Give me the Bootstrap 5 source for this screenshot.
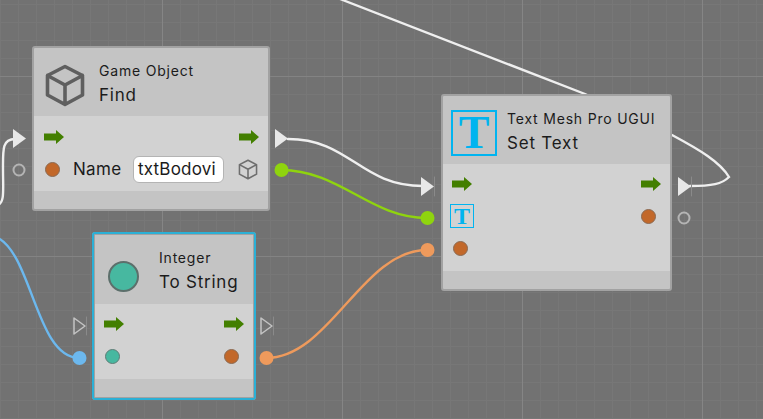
<!DOCTYPE html>
<html lang="en">
<head>
<meta charset="utf-8">
<title>Flow graph</title>
<link href="https://cdn.jsdelivr.net/npm/bootstrap@5.3.0/dist/css/bootstrap.min.css" rel="stylesheet">
<style>
html,body{margin:0;height:100%;background:#727272;overflow:hidden}
.graph-canvas{position:relative;width:763px;height:419px;overflow:hidden;background-color:#727272;
 background-image:
  linear-gradient(to right,#858585 1px,transparent 1px),
  linear-gradient(to bottom,#838383 1px,transparent 1px),
  linear-gradient(to right,#777 1px,transparent 1px),
  linear-gradient(to bottom,#777 1px,transparent 1px);
 background-size:180px 180px,180px 180px,18px 18px,18px 18px;
 background-position:162px 0,0 76px,0 0,0 4px;
 font-family:Inter,"Liberation Sans",sans-serif;color:#1b1b1b}
.wires{position:absolute;left:0;top:0;width:763px;height:419px}
.flow-node{position:absolute;background:#c4c4c4;border:2px solid #a2a2a2;border-radius:3px}
.node-find{left:32px;top:46px;width:238px;height:165px}
.node-string{left:92px;top:232px;width:164px;height:168px;outline:2px solid #2bb0d6;outline-offset:-2px;border-width:3px}
.node-text{left:441px;top:94px;width:231px;height:197px}
.node-head{height:68px}
.node-string .node-head{height:69px}
.title-stack{margin-top:4px}
.node-string .title-stack{margin-top:3px}
.head-icon-find{margin-left:11px;margin-right:14px;margin-top:7px}
.head-icon-string{margin-left:13px;margin-right:20px;margin-top:14px}
.head-icon-text{margin-left:8px;margin-right:10px;margin-top:6px}
.title-small{font-size:14px;line-height:18px;letter-spacing:.8px}
.title-big{font-size:17px;line-height:24px;letter-spacing:.78px;margin-top:3px}
.node-body{background:#d2d2d2;padding:4px 9px 0 10px}
.node-find .node-body{height:75px}
.node-string .node-body{height:75px;padding:3px 9px 0}
.node-text .node-body{height:107px;padding:4px 9px 0}
.port-line{height:33px}
.node-text .port-line{height:32px}
.flow-arrow{width:20px;height:14px;display:block}
.dot{width:15px;height:15px;border-radius:50%;background:#c2682a;border:1px solid #8b6a52;flex:none}
.dot-teal{background:#47b8a0;border-color:#5f7c76}
.dot-in{margin-left:1px}
.dot-out{margin-right:5px}
.name-label{font-size:17px;margin-left:13px;width:60px;letter-spacing:.3px}
.text-field{width:91px;height:27px;background:#fff;border:1px solid #b4b4b4;border-radius:6px;font-size:17px;line-height:25px;padding-left:4px;letter-spacing:.2px;white-space:nowrap;overflow:hidden}
.find-cube{margin-left:14px}
.big-t{width:46px;height:46px;border:2px solid #00b4f0;color:#00b4f0;font-family:"Liberation Serif",serif;font-weight:700;font-size:46px;line-height:42px;text-align:center}
.small-t{width:24px;height:24px;margin-left:-2px;border:1px solid #00b4f0;color:#00b4f0;font-family:"Liberation Serif",serif;font-weight:700;font-size:24px;line-height:22px;text-align:center}
.teal-ball{width:31px;height:31px;border-radius:50%;background:#47b8a0;border:2px solid #5c6f6b}
</style>
</head>
<body>
<div class="graph-canvas">
  <svg class="wires" viewBox="0 0 763 419" fill="none" stroke-linecap="round">
    <path d="M340 -1 L585 94 L672 135 C700 150 720 162 729 177 C722 184 712 186 690 186" stroke="#efefef" stroke-width="2.400"/>
    <path d="M288 139 C350 139 360 186 423 186" stroke="#efefef" stroke-width="2.400"/>
    <path d="M15 139 C2 139 3 150 3 170 C3 190 5 204 -3 205" stroke="#efefef" stroke-width="2.400"/>
    <path d="M281 170 C340 170 370 218 427 218" stroke="#8fd40e" stroke-width="2.400"/>
    <path d="M266 358 C330 358 362 250 427 250" stroke="#ee9a5c" stroke-width="2.400"/>
    <path d="M-4 237 C32 252 36 358 79 358" stroke="#6cb8ee" stroke-width="2.400"/>
    <g stroke="#8a8a8a" stroke-width="1">
      <path d="M434.500 177V196M691.500 177V196M86.500 317V335M273.500 317V335"/>
    </g>
    <g fill="#e8e8e8" stroke="none">
      <polygon points="13,129 26,138.500 13,148"/>
      <polygon points="275,129 288,138.500 275,148"/>
      <polygon points="421,177 434,186.500 421,196"/>
      <polygon points="678,177 691,186.500 678,196"/>
    </g>
    <g stroke="#c4c4c4" stroke-width="1.500" stroke-linejoin="round">
      <polygon points="74,318 85,326 74,334"/>
      <polygon points="261,318 272,326 261,334"/>
    </g>
    <g stroke="#b4b4b4" stroke-width="2">
      <circle cx="19" cy="170" r="5.500"/>
      <circle cx="684" cy="218" r="5.500"/>
    </g>
    <g stroke="none">
      <circle cx="281.500" cy="170" r="7" fill="#8fd40e"/>
      <circle cx="427.500" cy="218" r="7" fill="#8fd40e"/>
      <circle cx="427.500" cy="250" r="7" fill="#ee9a5c"/>
      <circle cx="79.500" cy="358" r="7" fill="#6cb8ee"/>
      <circle cx="266.500" cy="358" r="7" fill="#ee9a5c"/>
    </g>
  </svg>

  <section class="flow-node node-find d-flex flex-column">
    <div class="node-head d-flex align-items-center">
      <svg class="head-icon-find" width="40" height="43" viewBox="0 0 40 43" fill="none" stroke="#5f5f5f" stroke-width="3.600" stroke-linejoin="round" stroke-linecap="round"><path d="M20 2.500 L37.500 11.500 V31 L20 40.500 L2.500 31 V11.500 Z M2.500 11.500 L20 21 L37.500 11.500 M20 21 V40.500"/></svg>
      <div class="title-stack"><div class="title-small">Game Object</div><div class="title-big">Find</div></div>
    </div>
    <div class="node-body">
      <div class="port-line d-flex align-items-center justify-content-between">
        <svg class="flow-arrow" viewBox="0 0 20 14"><polygon fill="#437f00" points="0,3.500 12,3.500 12,0 20,7 12,14 12,10.500 0,10.500"/></svg>
        <svg class="flow-arrow" viewBox="0 0 20 14"><polygon fill="#437f00" points="0,3.500 12,3.500 12,0 20,7 12,14 12,10.500 0,10.500"/></svg>
      </div>
      <div class="port-line d-flex align-items-center">
        <span class="dot dot-in"></span>
        <span class="name-label">Name</span>
        <span class="text-field">txtBodovi</span>
        <svg class="find-cube" width="20" height="21" viewBox="0 0 40 43" fill="none" stroke="#6e6e6e" stroke-width="3.200" stroke-linejoin="round"><path d="M20 2.500 L37.500 11.500 V31 L20 40.500 L2.500 31 V11.500 Z M2.500 11.500 L20 21 L37.500 11.500 M20 21 V40.500"/></svg>
      </div>
    </div>
  </section>

  <section class="flow-node node-string d-flex flex-column">
    <div class="node-head d-flex align-items-center">
      <span class="teal-ball head-icon-string"></span>
      <div class="title-stack"><div class="title-small">Integer</div><div class="title-big">To String</div></div>
    </div>
    <div class="node-body">
      <div class="port-line d-flex align-items-center justify-content-between">
        <svg class="flow-arrow" viewBox="0 0 20 14"><polygon fill="#437f00" points="0,3.500 12,3.500 12,0 20,7 12,14 12,10.500 0,10.500"/></svg>
        <svg class="flow-arrow" viewBox="0 0 20 14"><polygon fill="#437f00" points="0,3.500 12,3.500 12,0 20,7 12,14 12,10.500 0,10.500"/></svg>
      </div>
      <div class="port-line d-flex align-items-center justify-content-between">
        <span class="dot dot-teal dot-in"></span>
        <span class="dot dot-out"></span>
      </div>
    </div>
  </section>

  <section class="flow-node node-text d-flex flex-column">
    <div class="node-head d-flex align-items-center">
      <span class="big-t head-icon-text">T</span>
      <div class="title-stack"><div class="title-small">Text Mesh Pro UGUI</div><div class="title-big">Set Text</div></div>
    </div>
    <div class="node-body">
      <div class="port-line d-flex align-items-center justify-content-between">
        <svg class="flow-arrow" viewBox="0 0 20 14"><polygon fill="#437f00" points="0,3.500 12,3.500 12,0 20,7 12,14 12,10.500 0,10.500"/></svg>
        <svg class="flow-arrow" viewBox="0 0 20 14"><polygon fill="#437f00" points="0,3.500 12,3.500 12,0 20,7 12,14 12,10.500 0,10.500"/></svg>
      </div>
      <div class="port-line d-flex align-items-center justify-content-between">
        <span class="small-t">T</span>
        <span class="dot dot-out"></span>
      </div>
      <div class="port-line d-flex align-items-center">
        <span class="dot dot-in"></span>
      </div>
    </div>
  </section>
</div>
<script src="https://cdn.jsdelivr.net/npm/bootstrap@5.3.0/dist/js/bootstrap.bundle.min.js"></script>
</body>
</html>
